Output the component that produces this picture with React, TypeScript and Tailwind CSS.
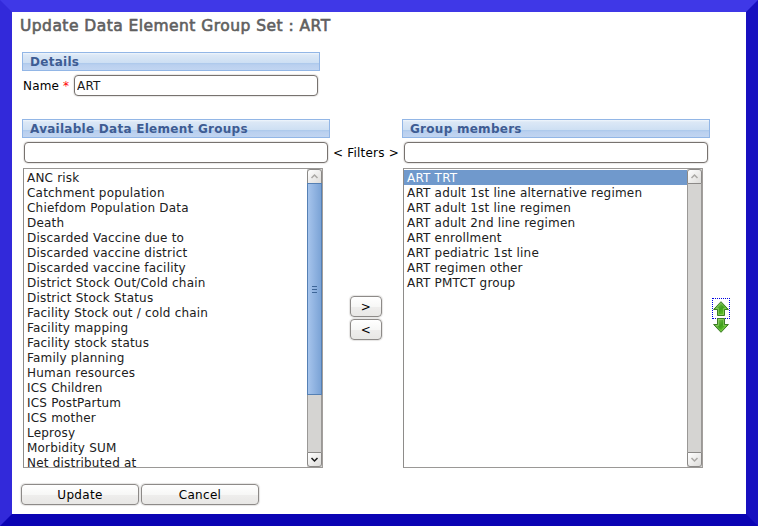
import React from 'react';

const available = [
  'ANC risk', 'Catchment population', 'Chiefdom Population Data', 'Death', 'Discarded Vaccine due to',
  'Discarded vaccine district', 'Discarded vaccine facility', 'District Stock Out/Cold chain',
  'District Stock Status', 'Facility Stock out / cold chain', 'Facility mapping', 'Facility stock status',
  'Family planning', 'Human resources', 'ICS Children', 'ICS PostPartum', 'ICS mother', 'Leprosy',
  'Morbidity SUM', 'Net distributed at',
];

const members = [
  'ART TRT', 'ART adult 1st line alternative regimen', 'ART adult 1st line regimen',
  'ART adult 2nd line regimen', 'ART enrollment', 'ART pediatric 1st line', 'ART regimen other',
  'ART PMTCT group',
];

function Header({ children, className }: { children: React.ReactNode; className: string }) {
  return (
    <div className={`h-[19px] border border-[#92b6e6] bg-[linear-gradient(#f0f6fc_0,#dce8f6_2px,#cddff3_10px,#abc8eb_10px,#bad0ef_12px,#c1d5f1_17px)] pl-[7px] text-[12px] leading-[18px] font-bold tracking-[0.27px] text-[#3e5c93] whitespace-nowrap ${className}`}>
      {children}
    </div>
  );
}

function Field({ value, className }: { value?: string; className: string }) {
  return (
    <input
      type="text"
      defaultValue={value}
      className={`h-[21px] rounded-[4px] border border-[#77726f] bg-white px-[2px] text-[12px] text-[#1a1a1a] shadow-[0_0_1px_1px_#e9e8e7] outline-none ${className}`}
    />
  );
}

function Arrow({ down, dim }: { down?: boolean; dim?: boolean }) {
  return (
    <div className={`flex h-[15px] w-[15px] shrink-0 items-center justify-center border border-[#8b8987] bg-linear-to-br from-white to-[#dddcda] ${down ? 'rounded-b-[3px]' : 'rounded-t-[3px]'}`}>
      <svg width="9" height="7" viewBox="0 0 9 7" fill="none" stroke={dim ? '#aaa8a5' : '#1a1a1a'} strokeWidth="1.5">
        <path d={down ? 'M1.5 2 L4.5 5 L7.5 2' : 'M1.5 5 L4.5 2 L7.5 5'} />
      </svg>
    </div>
  );
}

function List({ items, selected, scrollable }: { items: string[]; selected?: number; scrollable?: boolean }) {
  return (
    <div className="flex h-[300px] w-[300px] border border-t-[#9a9896] border-r-[#a39f9c] border-b-[#9a9896] border-l-[#8e8c8a] bg-white">
      <div className="min-w-0 flex-1 overflow-hidden pt-px">
        {items.map((item, i) => (
          <div key={item} className={`h-[15px] pl-[3px] text-[12px] leading-[17px] tracking-[0.2px] whitespace-nowrap ${i === selected ? 'bg-[#7099cc] text-white' : 'text-[#202020]'}`}>
            {item}
          </div>
        ))}
      </div>
      <div className="flex w-[15px] flex-col bg-[#d5d4d2]">
        <Arrow dim />
        <div className="flex-1 border-x border-[#9a9896]">
          {scrollable && (
            <div className="-mx-px -mt-px flex h-[212px] flex-col items-center justify-center gap-[2px] border border-[#5580b4] bg-linear-to-r from-[#a6c4ec] to-[#7ba3d6]">
              <div className="h-px w-[5px] bg-[#3d6597]" />
              <div className="h-px w-[5px] bg-[#3d6597]" />
              <div className="h-px w-[5px] bg-[#3d6597]" />
            </div>
          )}
        </div>
        <Arrow down dim={!scrollable} />
      </div>
    </div>
  );
}

function Button({ children, className }: { children: React.ReactNode; className: string }) {
  return (
    <button className={`flex h-[21px] items-center justify-center rounded-[4px] border border-[#8d8a88] bg-[linear-gradient(#ffffff,#f7f7f6_50%,#eeedec_55%,#e8e7e5)] pt-px text-[12px] tracking-[0.3px] text-black shadow-[0_0_1px_1px_#e6e5e4] ${className}`}>
      {children}
    </button>
  );
}

function GreenArrow({ down }: { down?: boolean }) {
  const fill = down ? 'greenDown' : 'greenUp';
  return (
    <svg width="16" height="16" viewBox="0 0 16 16">
      <defs>
        <linearGradient id={fill} x1="0" y1="0" x2="1" y2="1">
          <stop offset="0" stopColor="#9ad06f" />
          <stop offset=".5" stopColor="#3f9f1c" />
          <stop offset="1" stopColor="#7be032" />
        </linearGradient>
      </defs>
      <path
        d={down ? 'M8 15.3 L15.4 7.5 H11.5 V1.5 H4.5 V7.5 H0.6 Z' : 'M8 0.7 L15.4 8.5 H11.5 V14.5 H4.5 V8.5 H0.6 Z'}
        fill={`url(#${fill})`}
        stroke="#3d7c26"
        strokeLinejoin="round"
      />
      <path
        d={down ? 'M8 13.7 L13 8.5 H10.5 V2.5 H5.5 V8.5 H3 Z' : 'M8 2.3 L13 7.5 H10.5 V13.5 H5.5 V7.5 H3 Z'}
        fill="none"
        stroke="#a6dd7c"
        strokeOpacity=".5"
      />
    </svg>
  );
}

export default function App() {
  return (
    <div className="h-[526px] w-[758px] overflow-hidden border-[12px] border-t-[#3f38e7] border-r-[#1810c0] border-b-[#0b03b4] border-l-[#3229da] bg-white font-['DejaVu_Sans',sans-serif]">
      <h1 className="mt-[4px] ml-[8px] h-[20px] text-[15.5px] leading-[20px] tracking-[0.46px] whitespace-nowrap text-[#606060] [-webkit-text-stroke:0.6px_#606060]">
        Update Data Element Group Set : ART
      </h1>
      <Header className="mt-[16px] ml-[10px] w-[298px]">Details</Header>
      <div className="mt-[4px] ml-[11px] flex h-[21px] items-center text-[12px] tracking-[0.2px] text-black">
        <span className="w-[40px] pt-px">Name</span>
        <span className="w-[11px] pt-px text-[#f00]">*</span>
        <Field value="ART" className="w-[244px]" />
      </div>
      <div className="mt-[23px] ml-[10px] flex">
        <div className="w-[308px]">
          <Header className="w-[308px]">Available Data Element Groups</Header>
          <Field className="mt-[4px] ml-[2px] block w-[304px]" />
          <div className="mt-[5px] ml-px"><List items={available} scrollable /></div>
        </div>
        <div className="flex w-[72px] flex-col items-center">
          <div className="mt-[24px] h-[20px] text-[12px] leading-[20px] tracking-[0.22px] whitespace-nowrap">&lt; Filters &gt;</div>
          <Button className="mt-[133px] w-[32px]">&gt;</Button>
          <Button className="mt-[2px] w-[32px]">&lt;</Button>
        </div>
        <div className="w-[308px]">
          <Header className="w-[308px]">Group members</Header>
          <Field className="mt-[4px] ml-[2px] block w-[304px]" />
          <div className="mt-[5px] ml-px"><List items={members} selected={0} /></div>
        </div>
        <div className="ml-[2px] flex w-[18px] flex-col items-center pt-[179px]">
          <div className="flex h-[21px] w-[18px] items-center justify-center border border-dotted border-[#0000e0]"><GreenArrow /></div>
          <div className="-mt-[2px]"><GreenArrow down /></div>
        </div>
      </div>
      <div className="mt-[16px] ml-[9px] flex gap-[2px]">
        <Button className="w-[118px]">Update</Button>
        <Button className="w-[118px]">Cancel</Button>
      </div>
    </div>
  );
}
